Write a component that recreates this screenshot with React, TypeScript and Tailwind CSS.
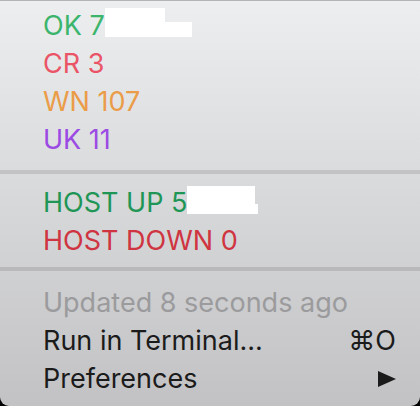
import { ReactNode } from 'react'

const font = { fontFamily: 'Inter, "Liberation Sans", sans-serif' }

function Row({ children, className = '' }: { children: ReactNode; className?: string }) {
  return <div className={`h-[38px] flex items-center pl-[43px] pr-[24px] text-[27px] ${className}`}>{children}</div>
}

function Redact({ a, b }: { a: string; b: string }) {
  return (
    <span className="relative inline-block w-0 h-[30px]">
      <span className={`absolute bg-white ${a}`} />
      <span className={`absolute bg-white ${b}`} />
    </span>
  )
}

export default function App() {
  return (
    <div className="w-[420px] h-[406px] bg-black" style={font}>
      <div className="h-full rounded-b-[9px] overflow-hidden border-t border-[#b3b4b6] bg-gradient-to-b from-[#eceef0] to-[#c2c2c4] flex flex-col">
        <div className="pt-[6px]">
          <Row className="text-[#3bb56c]">
            OK 7
            <Redact a="left-[0px] top-[-3px] w-[60px] h-[14px]" b="left-[0px] top-[11px] w-[87px] h-[15px]" />
          </Row>
          <Row className="text-[#ea5466]">CR 3</Row>
          <Row className="text-[#eb9c48]">WN 107</Row>
          <Row className="text-[#9b4ae3]">UK 11</Row>
        </div>
        <div className="mt-[11px] h-[4px] bg-[#c3c3c5]" />
        <div className="pt-[10px]">
          <Row className="text-[#1f9656]">
            HOST UP 5
            <Redact a="left-[0px] top-[-2px] w-[68px] h-[18px]" b="left-[0px] top-[16px] w-[71px] h-[10px]" />
          </Row>
          <Row className="text-[#cf3441]">HOST DOWN 0</Row>
        </div>
        <div className="mt-[7px] h-[4px] bg-[#b9b9bb]" />
        <div className="pt-[13px]">
          <Row className="text-[#9b9b9d]">Updated 8 seconds ago</Row>
          <Row className="text-[#1b1b1b] justify-between">
            <span>Run in Terminal...</span>
            <span>⌘O</span>
          </Row>
          <Row className="text-[#1b1b1b] justify-between">
            <span>Preferences</span>
            <svg width="18" height="16" viewBox="0 0 18 16" className="mr-[0px]">
              <path d="M0 0 L18 8 L0 16 Z" fill="#1b1b1b" />
            </svg>
          </Row>
        </div>
      </div>
    </div>
  )
}
